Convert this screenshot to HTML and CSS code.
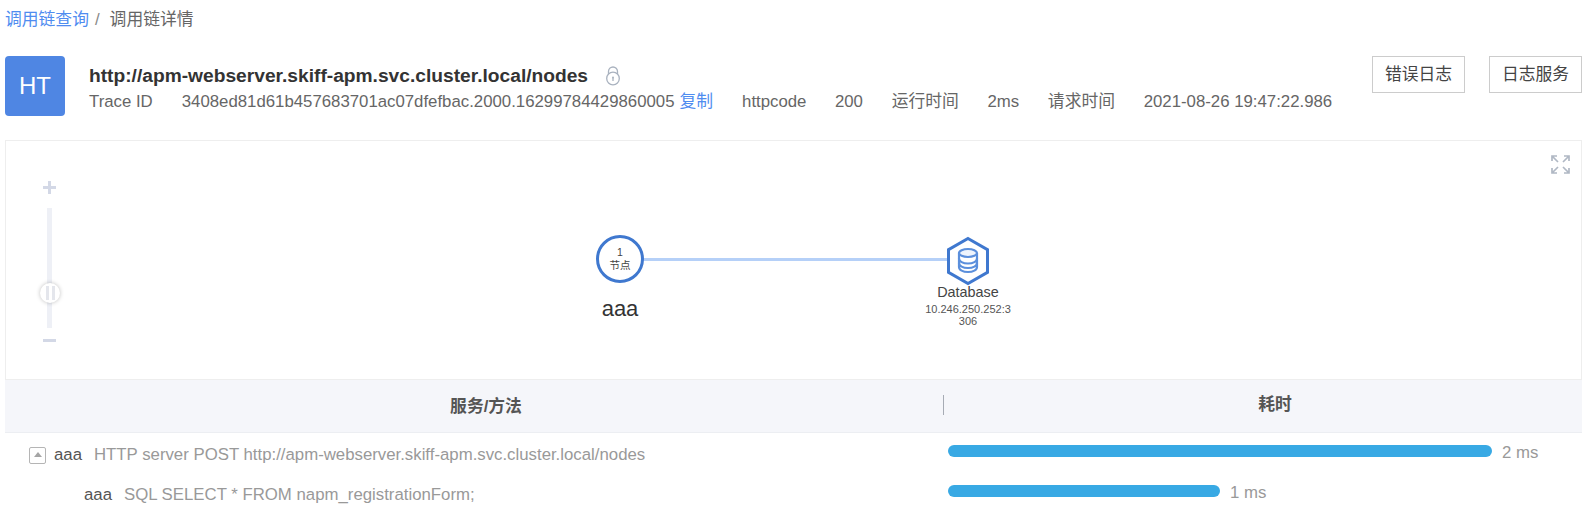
FILE: index.html
```html
<!DOCTYPE html>
<html lang="zh-CN">
<head>
<meta charset="utf-8">
<title>调用链详情</title>
<link rel="stylesheet" href="styles.css">
</head>
<body>
<main class="page">
  <nav class="crumbs"><a class="crumb-link">调用链查询</a><span class="crumb-sep">/</span><span class="crumb-current">调用链详情</span></nav>
  <header class="head">
    <div class="avatar">HT</div>
    <div class="head-info">
      <div class="title-row">
        <h1 class="title">http://apm-webserver.skiff-apm.svc.cluster.local/nodes</h1>
        <svg class="lock" width="16" height="20" viewBox="0 0 16 20" fill="none" stroke="#a9b2bf" stroke-width="1.3"><path d="M3.500 9V5.500a4.500 4.500 0 0 1 9 0V9"/><circle cx="8" cy="12.500" r="6.300" fill="#fff"/><circle cx="8" cy="11.500" r="1" fill="#a9b2bf" stroke="none"/><path d="M8 12v3"/></svg>
      </div>
      <div class="meta">
        <span class="meta-label">Trace ID</span><span class="meta-trace">3408ed81d61b457683701ac07dfefbac.2000.16299784429860005</span><a class="copy">复制</a><span class="meta-label2">httpcode</span><span class="meta-val">200</span><span class="meta-label3">运行时间</span><span class="meta-val">2ms</span><span class="meta-label3">请求时间</span><span class="meta-val">2021-08-26 19:47:22.986</span>
      </div>
    </div>
    <div class="actions"><button class="btn">错误日志</button><button class="btn">日志服务</button></div>
  </header>
  <section class="graph">
    <svg class="expand" width="19" height="19" viewBox="0 0 19 19" fill="none" stroke="#b0b8c4" stroke-width="1.700"><path d="M1 6V1h5M1 1l6 6M13 1h5v5M18 1l-6 6M1 13v5h5M1 18l6-6M18 13v5h-5M18 18l-6-6"/></svg>
    <div class="zoom">
      <span class="zoom-plus"></span>
      <span class="zoom-track"></span>
      <span class="zoom-thumb"><i></i><i></i></span>
      <span class="zoom-minus"></span>
    </div>
    <span class="edge"></span>
    <div class="node node-app">
      <div class="circle"><span class="circle-num">1</span><span class="circle-txt">节点</span></div>
      <div class="node-name">aaa</div>
    </div>
    <div class="node node-db">
      <svg class="hex" width="44" height="50" viewBox="0 0 44 50"><path d="M22 2.500 41.500 13.700v22.600L22 47.500 2.500 36.300V13.700z" fill="#fff" stroke="#3f78cf" stroke-width="3"/><g fill="none" stroke="#5b8fdc" stroke-width="2.200"><ellipse cx="22" cy="17" rx="9" ry="4" fill="#eef4fd"/><path d="M13 17v14c0 3 4 5 9 5s9-2 9-5V17"/><path d="M13 22.500c0 3 4 5 9 5s9-2 9-5"/><path d="M13 27c0 3 4 5 9 5s9-2 9-5"/></g></svg>
      <div class="db-name">Database</div>
      <div class="db-addr">10.246.250.252:3<br>306</div>
    </div>
  </section>
  <section class="table">
    <div class="thead"><div class="th th-left">服务/方法</div><div class="th th-right">耗时</div></div>
    <div class="row">
      <div class="cell-left lvl0"><span class="toggle"></span><span class="svc">aaa</span><span class="op">HTTP server POST http://apm-webserver.skiff-apm.svc.cluster.local/nodes</span></div>
      <div class="cell-right"><span class="bar bar-full"></span><span class="dur">2 ms</span></div>
    </div>
    <div class="row">
      <div class="cell-left lvl1"><span class="svc">aaa</span><span class="op">SQL SELECT * FROM napm_registrationForm;</span></div>
      <div class="cell-right"><span class="bar bar-half"></span><span class="dur">1 ms</span></div>
    </div>
  </section>
</main>
</body>
</html>
```
FILE: styles.css
```css
* { box-sizing: border-box; }
html, body { margin: 0; padding: 0; background: #fff; }
body { font-family: "Liberation Sans", "Noto Sans CJK SC", sans-serif; color: #555; overflow: hidden; }
.page { padding: 0 8px 0 5px; width: 1590px; height: 531px; overflow: hidden; }
.crumbs { height: 40px; font-size: 16.8px; line-height: 40px; color: #666; display: flex; }
.crumb-link { color: #4f8cf0; }
.crumb-sep { margin: 0 10px 0 6px; color: #888; }
.head { display: flex; height: 100px; padding-top: 16px; }
.avatar { width: 60px; height: 60px; border-radius: 4px; background: #4f86e3; color: #fff; font-size: 24px; line-height: 60px; text-align: center; flex: none; }
.head-info { margin-left: 24px; flex: 1; }
.title-row { display: flex; align-items: center; height: 26px; margin-top: 7px; }
.title { margin: 0; font-size: 19.2px; font-weight: 700; color: #333; line-height: 26px; }
.lock { margin-left: 17px; }
.meta { display: flex; font-size: 16.8px; line-height: 24px; margin-top: 1px; color: #666; white-space: nowrap; }
.meta-label { margin-right: 29px; }
.copy { color: #4f8cf0; margin-left: 5px; }
.meta-label2 { margin-left: 29px; margin-right: 28.500px; }
.meta-val { margin-right: 28.700px; }
.meta-label3 { margin-right: 28.700px; }
.actions { display: flex; gap: 24px; flex: none; align-items: flex-start; }
.btn { height: 37px; width: 93px; padding: 0 0 3px; background: #fff; border: 1px solid #ccc; font: inherit; font-size: 16.8px; color: #444; }
.graph { position: relative; height: 240px; border: 1px solid #eee; }
.expand { position: absolute; right: 11px; top: 14px; }
.zoom { position: absolute; left: 31px; top: 34px; width: 26px; height: 180px; }
.zoom-plus { position: absolute; left: 6px; top: 6px; width: 13px; height: 13px; background: linear-gradient(#d3d8e6, #d3d8e6) center / 13px 3px no-repeat, linear-gradient(#d3d8e6, #d3d8e6) center / 3px 13px no-repeat; }
.zoom-track { position: absolute; left: 10px; top: 33px; width: 5px; height: 120px; background: #eef0f6; }
.zoom-thumb { position: absolute; left: 3px; top: 108px; width: 20px; height: 20px; border-radius: 50%; background: #fff; box-shadow: 0 0 4px rgba(0,0,0,.25); display: flex; justify-content: center; align-items: center; gap: 3px; }
.zoom-thumb i { width: 3px; height: 14px; background: #e4e6ec; }
.zoom-minus { position: absolute; left: 6px; top: 164px; width: 13px; height: 3px; background: #d3d8e6; }
.edge { position: absolute; left: 635px; top: 117px; width: 310px; height: 3px; background: #b5d0f8; }
.node { position: absolute; text-align: center; }
.node-app { left: 585px; top: 94px; width: 58px; }
.circle { width: 48px; height: 48px; margin: 0 auto; border: 3px solid #3f78cf; border-radius: 50%; background: #fff; display: flex; flex-direction: column; align-items: center; justify-content: center; color: #444; font-size: 10.500px; line-height: 13px; padding-bottom: 1px; }
.circle-num, .circle-txt { display: block; }
.node-name { font-size: 22px; line-height: 24px; color: #333; margin-top: 14px; }
.node-db { left: 917px; top: 95px; width: 90px; }
.hex { display: block; margin: 0 auto; }
.db-name { font-size: 14.4px; line-height: 18px; color: #444; margin-top: -3px; }
.db-addr { font-size: 11px; line-height: 12px; color: #555; margin-top: 2px; }
.thead { display: flex; height: 53px; background: #f5f6fa; border-bottom: 1px solid #eceef2; align-items: center; }
.th { font-size: 16.8px; font-weight: 700; color: #555; text-align: center; padding-left: 24px; margin-bottom: 2px; }
.th-left { width: 938px; }
.th-right { flex: 1; border-left: 1px solid #a6abb4; line-height: 20px; }
.row { display: flex; height: 40px; align-items: center; }
.cell-left { width: 938px; font-size: 16.8px; display: flex; align-items: center; padding-top: 4px; }
.lvl0 { padding-left: 24px; }
.lvl1 { padding-left: 79px; }
.toggle { position: relative; width: 17px; height: 17px; border: 1px solid #b5b5b5; border-radius: 2px; margin-right: 8px; }
.toggle::after { content: ""; position: absolute; left: 4px; top: 4px; border: 4px solid transparent; border-top: 0; border-bottom: 5px solid #a5a5a5; }
.svc { color: #555; margin-right: 12px; }
.op { color: #999; }
.cell-right { flex: 1; display: flex; align-items: center; padding-left: 5px; padding-bottom: 4px; }
.bar { height: 12px; border-radius: 6px; background: #38a9e4; }
.bar-full { width: 544px; }
.bar-half { width: 272px; }
.dur { margin-left: 10px; margin-top: 4px; font-size: 16.8px; color: #999; }
```
